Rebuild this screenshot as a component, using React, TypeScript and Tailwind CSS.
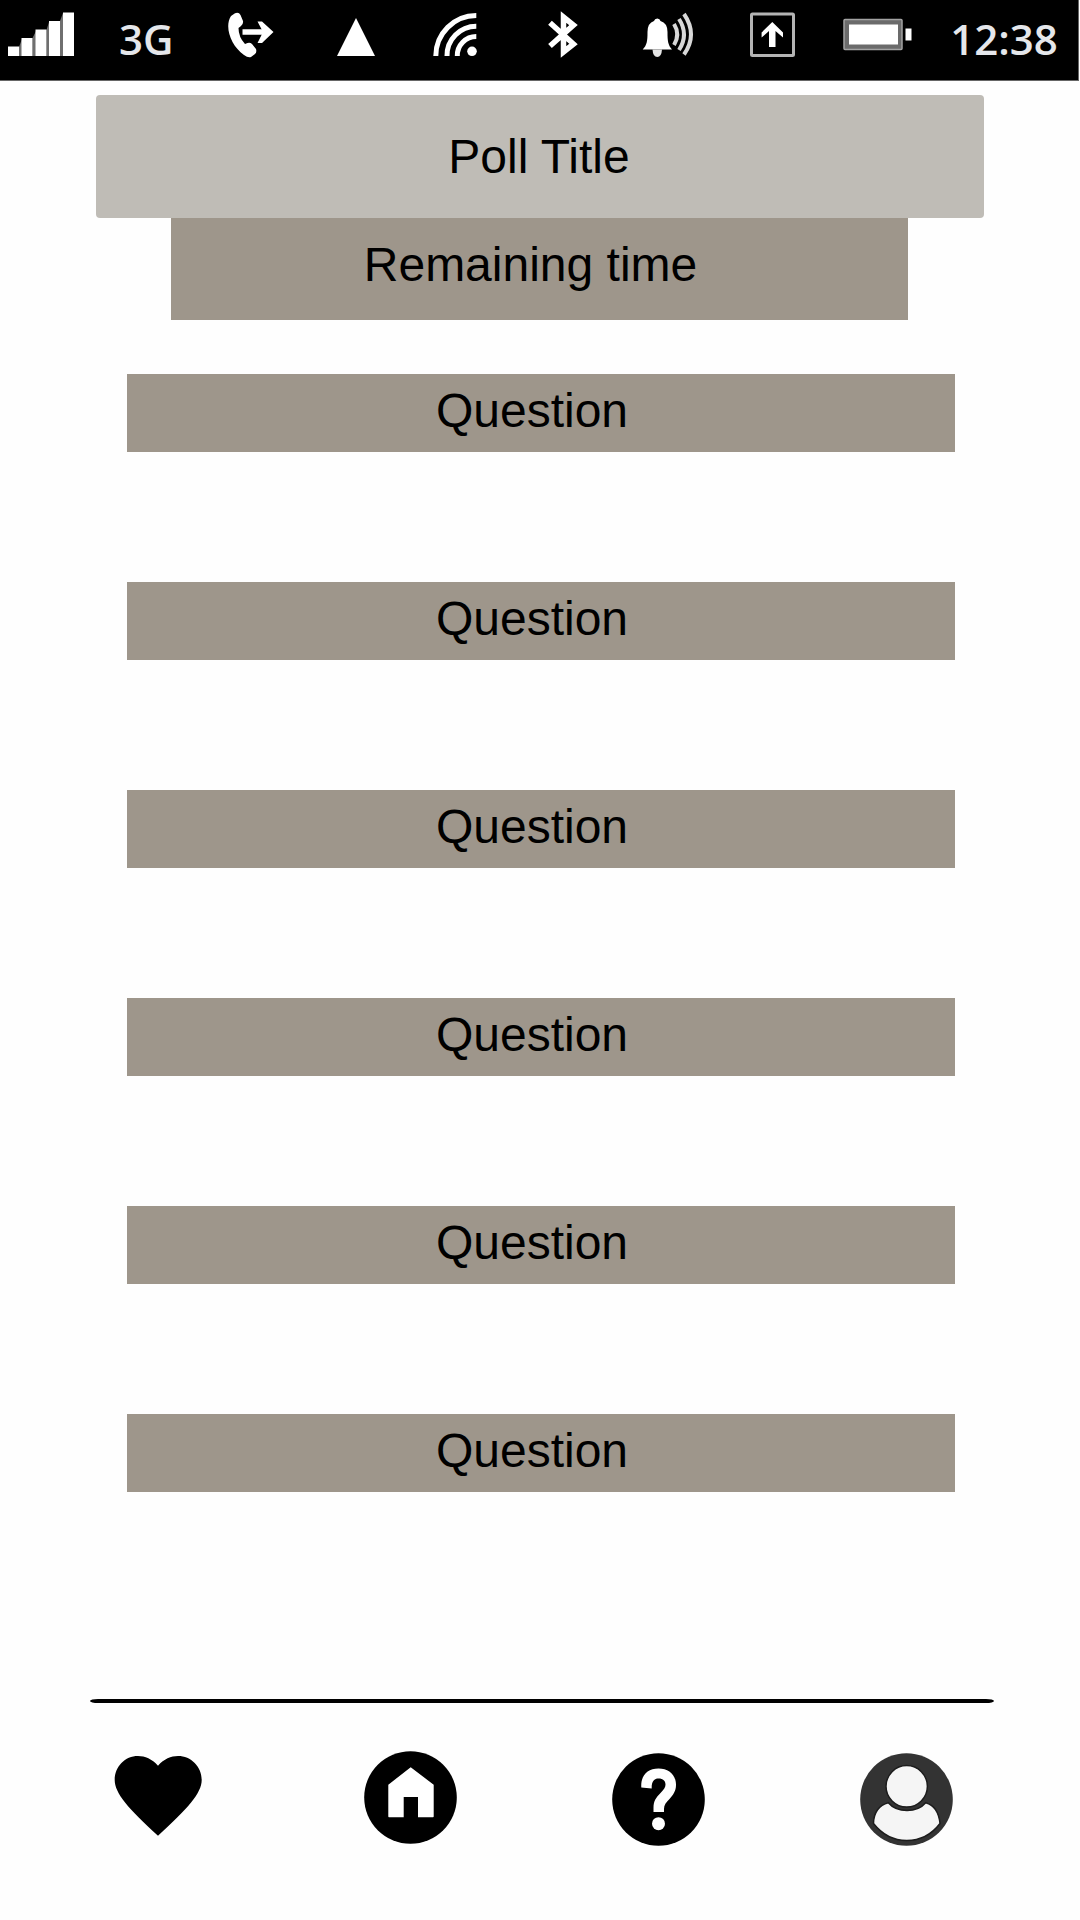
import React from "react";

function SignalIcon() {
  return (
    <svg width="66" height="48" viewBox="0 0 66 48" fill="#fff" aria-hidden="true">
      <path d="M11 36V45H14V28ZM24.500 27V45H28V20ZM38.500 19V45H41V11ZM52 10V45H55V2Z" fill="#6f6f6f" />
      <rect x="0" y="35.500" width="11" height="9.500" />
      <rect x="13.500" y="27" width="11" height="18" />
      <rect x="27.500" y="18.500" width="11" height="26.500" />
      <rect x="41" y="10" width="11" height="35" />
      <rect x="55" y="1.500" width="11" height="43.500" />
    </svg>
  );
}

function CallForwardIcon() {
  return (
    <svg width="48" height="48" viewBox="0 0 48 48" aria-hidden="true">
      <path
        d="M4 5L8 2.200Q12 1 13.500 4L16 10Q16.500 13 14 15L11.500 17Q11.500 26 18 33L20.500 32Q23 31 25 33L29 38Q30 41 28 43L24 46Q21 47 17 44C4 35 -3 16 4 5Z"
        fill="#fff"
      />
      <path d="M15.500 21H42" fill="none" stroke="#fff" strokeWidth="5.500" />
      <path d="M30.500 10.500H35L46.500 21L35 32H30.500L36 21Z" fill="#fff" />
    </svg>
  );
}

function TriangleIcon() {
  return (
    <svg width="40" height="48" viewBox="-1 0 40 48" aria-hidden="true">
      <path d="M20 7L39 45H1Z" fill="#fff" />
    </svg>
  );
}

function WifiIcon() {
  return (
    <svg width="54" height="48" viewBox="0 0 54 48" fill="none" stroke="#fff" strokeWidth="5" aria-hidden="true">
      <path d="M2.800 45A40.500 40.500 0 0 1 43.300 4.500" />
      <path d="M14 45A29.300 29.300 0 0 1 43.300 15.200" />
      <path d="M24.300 45A19 19 0 0 1 43.300 25.600" />
      <circle cx="39" cy="40.300" r="4.800" fill="#fff" stroke="none" />
    </svg>
  );
}

function BluetoothIcon() {
  return (
    <svg width="32" height="48" viewBox="0 0 32 48" fill="none" stroke="#fff" strokeWidth="5.500" aria-hidden="true">
      <path d="M2 11.700L25.500 33L15.500 41V6L25.500 14L2 35" />
    </svg>
  );
}

function BellIcon() {
  return (
    <svg width="54" height="48" viewBox="0 0 54 48" aria-hidden="true">
      <path
        d="M15.300 7.500Q18 7.500 18.500 10Q25.500 12 25.500 21C25.500 30 26 34 30 38.500H0.700C5 34 5.500 30 5.500 21Q5.500 12 12 10Q12.600 7.500 15.300 7.500Z"
        fill="#fff"
      />
      <path d="M10.500 38.500H20Q19.500 46 15.300 46Q11 46 10.500 38.500Z" fill="#e5e5e5" />
      <g fill="none" stroke="#d8d8d8" strokeWidth="4">
        <path d="M32 13Q38.500 23.500 32 34" />
        <path d="M37 8Q47 23.500 37 39" />
        <path d="M42 3Q56 23.500 42 43.500" />
      </g>
    </svg>
  );
}

function UploadIcon() {
  return (
    <svg width="48" height="48" viewBox="0 0 48 48" aria-hidden="true">
      <rect x="2.500" y="3" width="42" height="41.500" rx="1" fill="none" stroke="#b4b4b4" strokeWidth="3" />
      <path d="M23.300 11L34 21.500V26.500L26.500 20V36H20V20L12.600 26.500V21.500Z" fill="#fff" />
    </svg>
  );
}

function BatteryIcon() {
  return (
    <svg width="70" height="48" viewBox="0 0 70 48" aria-hidden="true">
      <rect x="1" y="8.500" width="58" height="30" rx="1" fill="#6b6b6b" stroke="#a3a3a3" strokeWidth="1.500" />
      <rect x="6" y="13.500" width="49" height="20" fill="#fff" />
      <rect x="62.500" y="17.500" width="6" height="12" fill="#fff" />
    </svg>
  );
}

function HeartIcon() {
  return (
    <svg width="97" height="96" viewBox="0 0 97 96" aria-hidden="true">
      <path d="M46 14.700C40 8 33 5 26 5C13 5 2.700 15.500 2.700 29C2.700 42 16 57.500 46 84.700C76 57.500 89.700 42 89.700 29C89.700 15.500 79 5 66 5C59 5 52 8 46 14.700Z" />
    </svg>
  );
}

function HomeIcon() {
  return (
    <svg width="93" height="96" viewBox="0 0 93 96" aria-hidden="true">
      <circle cx="46.500" cy="46.500" r="46.300" />
      <path
        d="M46.700 16.300L69.700 33.700V65.500Q69.700 66.300 69 66.300H54V46H39.700V66.300H25Q24.300 66.300 24.300 65.500V33.700Z"
        fill="#fff"
      />
    </svg>
  );
}

function HelpIcon() {
  return (
    <svg width="93" height="96" viewBox="0 0 93 96" aria-hidden="true">
      <circle cx="46.500" cy="48.500" r="46.300" />
      <path
        d="M29.300 36.500C28.500 25 35 17.500 46.500 17.500C57 17.500 64 24 64 34C64 40 61 44 57.500 48C54 51.500 52 54 52 58V61H41.500V57C41.500 50 44 46.500 48.500 42C52 38.500 53.500 36.500 53.500 33.500C53.500 30 51 27.500 46.800 27.500C42 27.500 39.500 30.500 39.700 37.500Z"
        fill="#fff"
      />
      <circle cx="46.500" cy="72.700" r="6.500" fill="#fff" />
    </svg>
  );
}

function ProfileIcon() {
  return (
    <svg width="93" height="96" viewBox="0 0 93 96" aria-hidden="true">
      <circle cx="46.500" cy="48.500" r="46.300" fill="#333" />
      <g fill="#f5f5f5" stroke="#1c1c1c" strokeWidth="1.500">
        <path d="M28.300 51.700C19 54 13.500 62 13.500 72.500Q27 89.500 46.700 89.500Q67 89.500 80 72.500C79 62 74 54 65.700 51.700C57 62 37 62 28.300 51.700Z" />
        <circle cx="46.700" cy="35.300" r="20.700" />
      </g>
    </svg>
  );
}

const statusText = "pt-2 font-['Open_Sans',sans-serif] text-[42px] leading-10 font-semibold text-gray-200";

const questions = ["Question", "Question", "Question", "Question", "Question", "Question"];

const tabs = [
  { label: "Favorites", icon: <HeartIcon /> },
  { label: "Home", icon: <HomeIcon /> },
  { label: "Help", icon: <HelpIcon /> },
  { label: "Profile", icon: <ProfileIcon /> },
];

export default function App() {
  return (
    <div className="flex min-h-screen flex-col bg-[#fefefe] font-['Liberation_Sans',Arial,sans-serif] text-5xl text-black">
      <header className="mr-px grid h-[81px] grid-cols-[188fr_repeat(8,209fr)_296fr] items-center justify-items-center border-r border-b border-[#666] bg-black pb-2.5">
        <div className="justify-self-start pl-2">
          <SignalIcon />
        </div>
        <span className={statusText}>3G</span>
        <CallForwardIcon />
        <TriangleIcon />
        <WifiIcon />
        <BluetoothIcon />
        <BellIcon />
        <UploadIcon />
        <BatteryIcon />
        <time className={statusText}>12:38</time>
      </header>

      <main className="flex flex-col pt-3.5">
        <h1 className="mx-24 flex h-[123px] items-center justify-center rounded bg-[#bfbcb6] pr-0.5">Poll Title</h1>
        <p className="mr-[172px] ml-[171px] flex h-[102px] items-center justify-center bg-[#9e968b] pr-[18px] pb-2">
          Remaining time
        </p>
        <ul className="mt-[54px] mr-[125px] ml-[127px] flex flex-col gap-[130px]">
          {questions.map((question, i) => (
            <li key={i} className="flex h-[78px] items-center justify-center bg-[#9e968b] pr-[18px] pb-1">
              {question}
            </li>
          ))}
        </ul>
      </main>

      <div className="mt-[207px] mr-[86px] ml-[90px] h-1 rounded-[8px/2px] bg-black" />
      <nav className="mx-28 mt-12 flex justify-between pr-[15px]">
        {tabs.map((tab) => (
          <button key={tab.label} type="button" aria-label={tab.label}>
            {tab.icon}
          </button>
        ))}
      </nav>
    </div>
  );
}
